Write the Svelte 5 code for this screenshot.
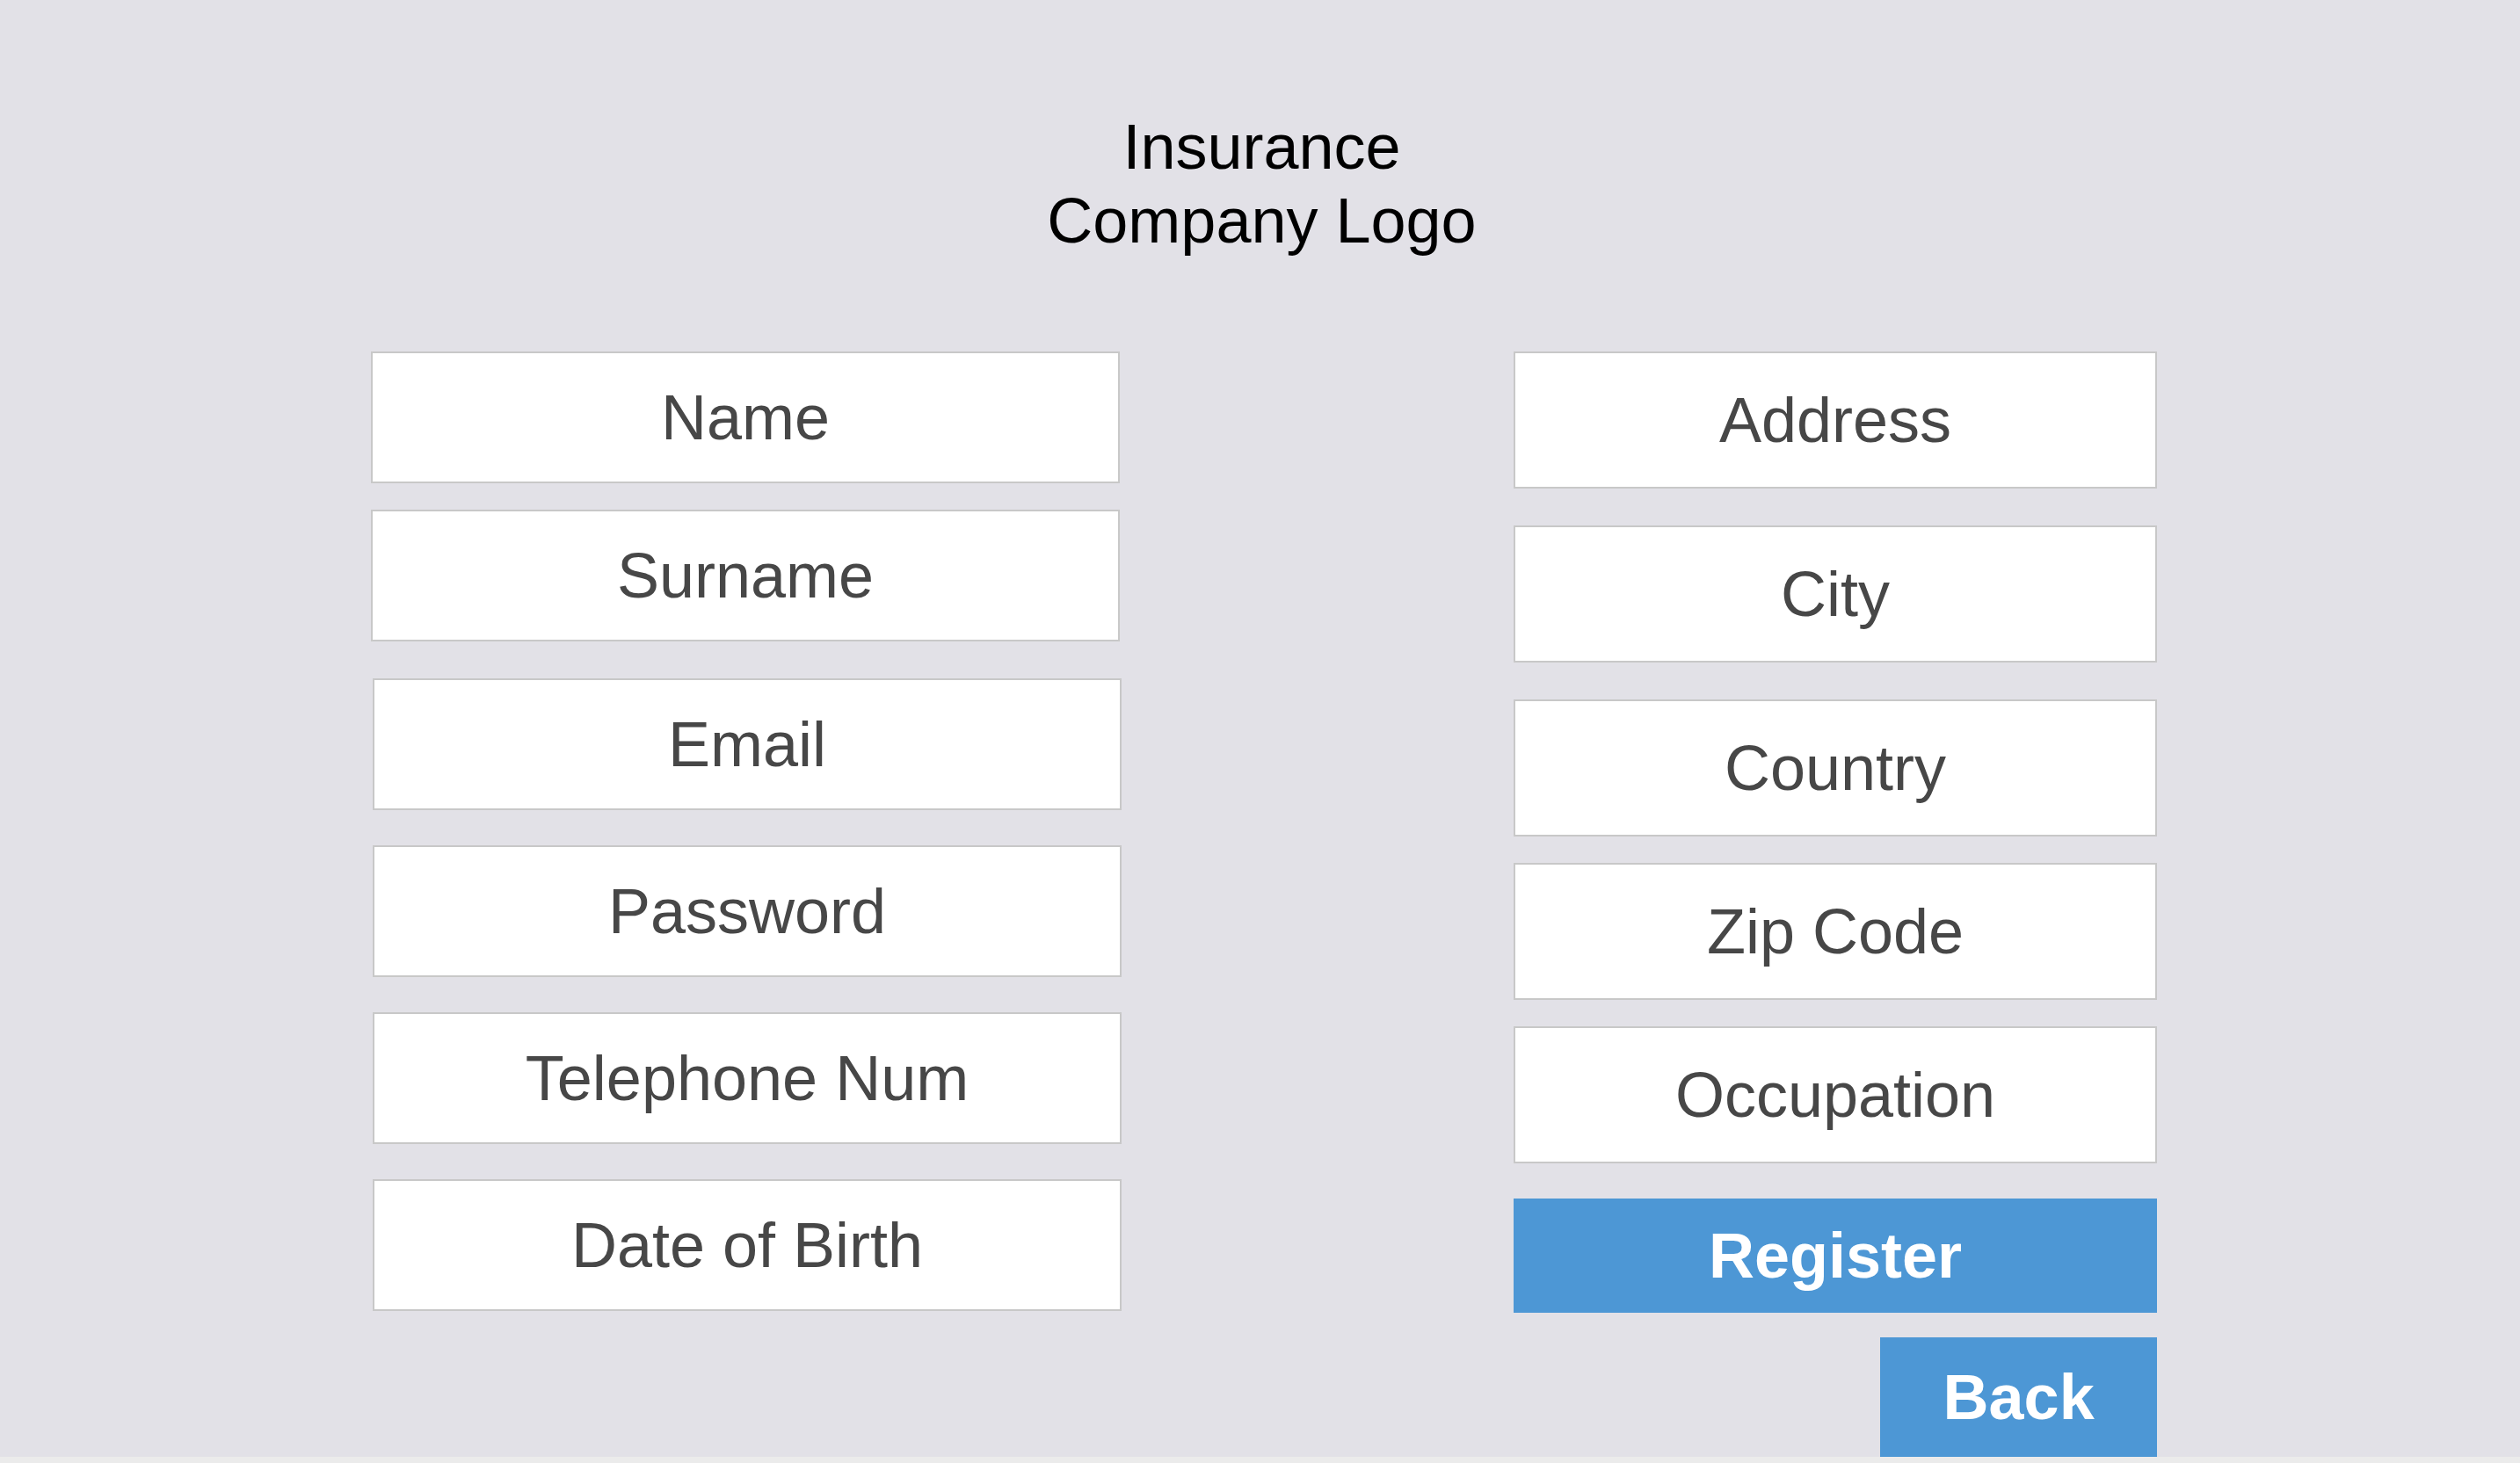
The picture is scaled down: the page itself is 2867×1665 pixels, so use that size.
<script>
  const personal = [
    { id: 'name', label: 'Name', type: 'text' },
    { id: 'surname', label: 'Surname', type: 'text' }
  ];
  const account = [
    { id: 'email', label: 'Email', type: 'email' },
    { id: 'password', label: 'Password', type: 'password' },
    { id: 'telephone', label: 'Telephone Num', type: 'tel' },
    { id: 'birth', label: 'Date of Birth', type: 'text' }
  ];
  const place = [
    { id: 'address', label: 'Address', type: 'text' },
    { id: 'city', label: 'City', type: 'text' },
    { id: 'country', label: 'Country', type: 'text' }
  ];
  const work = [
    { id: 'zip', label: 'Zip Code', type: 'text' },
    { id: 'occupation', label: 'Occupation', type: 'text' }
  ];
</script>

{#snippet fields(list)}
  {#each list as field (field.id)}
    <input id={field.id} name={field.id} type={field.type} placeholder={field.label} aria-label={field.label} />
  {/each}
{/snippet}

<main class="page">
  <h1 class="logo">Insurance<br />Company Logo</h1>

  <form class="form" onsubmit={(event) => event.preventDefault()}>
    <div class="column left">
      <div class="group personal">{@render fields(personal)}</div>
      <div class="group account">{@render fields(account)}</div>
    </div>
    <div class="column right">
      <div class="group place">{@render fields(place)}</div>
      <div class="group work">{@render fields(work)}</div>
      <div class="actions">
        <button class="register" type="submit">Register</button>
        <button class="back" type="button">Back</button>
      </div>
    </div>
  </form>
</main>

<style>
  :global(body) {
    margin: 0;
    background: #ebebeb;
  }

  .page {
    box-sizing: border-box;
    padding-top: 125px;
    background: #e2e1e7;
    font-family: 'Liberation Sans', Arial, sans-serif;
    font-size: 72px;
  }

  .logo {
    margin: 0 0 107px;
    padding-left: 4px;
    color: #000;
    font-size: 72px;
    font-weight: 400;
    line-height: 84px;
    text-align: center;
  }

  .form {
    display: grid;
    grid-template-columns: 422fr 854fr 446fr 732fr 413fr;
    align-items: start;
  }

  .column {
    display: flex;
    flex-direction: column;
    min-width: 0;
  }

  .left {
    grid-column: 2;
    gap: 42px;
  }

  .right {
    grid-column: 4;
    gap: 30px;
  }

  .group {
    display: flex;
    flex-direction: column;
  }

  .personal {
    gap: 30px;
    margin-right: 2px;
  }

  .account {
    gap: 40px;
    margin-left: 2px;
  }

  .place {
    gap: 42px;
  }

  .work {
    gap: 30px;
  }

  input {
    box-sizing: border-box;
    width: 100%;
    height: 150px;
    margin: 0;
    padding: 0 16px;
    border: 2px solid #c8c8c8;
    border-radius: 0;
    background: #fff;
    color: #474747;
    font: inherit;
    text-align: center;
  }

  .right input {
    height: 156px;
  }

  input::placeholder {
    color: #474747;
    opacity: 1;
  }

  .actions {
    display: flex;
    flex-direction: column;
    gap: 28px;
    padding-top: 10px;
  }

  button {
    margin: 0;
    padding: 0;
    border: 0;
    background: #4d97d5;
    color: #fff;
    font: inherit;
    font-weight: 700;
    cursor: pointer;
  }

  .register {
    height: 130px;
  }

  .back {
    align-self: flex-end;
    width: 43%;
    height: 136px;
  }
</style>
